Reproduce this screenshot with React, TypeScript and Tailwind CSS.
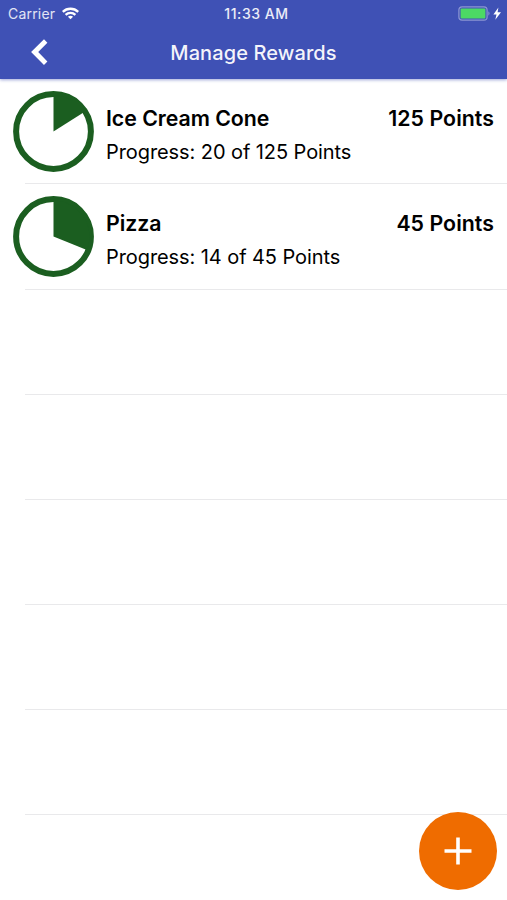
interface Reward {
  name: string
  earned: number
  cost: number
}

const REWARDS: Reward[] = [
  { name: 'Ice Cream Cone', earned: 20, cost: 125 },
  { name: 'Pizza', earned: 14, cost: 45 },
]

// Blank list rows below the rewards
const EMPTY_ROWS = 5

// ─────────────────────────────────────────────
// PROGRESS PIE
// ─────────────────────────────────────────────

function ProgressPie({ fraction }: { fraction: number }) {
  const angle = fraction * Math.PI * 2
  const x = 40.5 + 36 * Math.sin(angle)
  const y = 40.5 - 36 * Math.cos(angle)
  const large = fraction > 0.5 ? 1 : 0

  return (
    <svg className="size-[81px] shrink-0" viewBox="0 0 81 81">
      <circle cx="40.5" cy="40.5" r="37.4" fill="#fff" stroke="#1b5e20" strokeWidth="6" />
      <path d={`M40.5 40.5V4.5A36 36 0 ${large} 1 ${x} ${y}Z`} fill="#1b5e20" />
    </svg>
  )
}

// ─────────────────────────────────────────────
// HEADER
// ─────────────────────────────────────────────

function StatusBar() {
  return (
    <div className="grid h-[27px] grid-cols-3 items-center pr-[5px] pl-2 text-white">
      <div className="flex items-center gap-[7px]">
        <span className="text-[14px] tracking-[0.2px] text-white/85">Carrier</span>
        <svg className="h-[13px] w-[17px]" viewBox="0 0 17 13" fill="none" stroke="#fff" strokeWidth="2.3">
          <path d="M0.8 4.9C5.1 0.7 11.9 0.7 16.2 4.9" />
          <path d="M3.6 7.9C6.3 5.3 10.7 5.3 13.4 7.9" />
          <path d="M8.5 12.3L5.9 9.7C7.3 8.4 9.7 8.4 11.1 9.7Z" fill="#fff" stroke="none" />
        </svg>
      </div>
      <span className="ml-[3px] text-center text-[14px] font-medium tracking-[0.55px] text-white/90">11:33 AM</span>
      <div className="flex items-center justify-end">
        <svg className="h-[15px] w-[44px]" viewBox="0 0 44 15">
          <rect x="0.9" y="0.9" width="28.2" height="13.2" rx="3.2" fill="none" stroke="#fff" strokeOpacity="0.4" strokeWidth="1.2" />
          <rect x="2.6" y="2.6" width="24.8" height="9.8" rx="1" fill="#4cd964" />
          <path d="M30.5 5.3Q32.4 7.5 30.5 9.7Z" fill="#fff" fillOpacity="0.5" />
          <path d="M40.4 1.4L35.4 8.4H38.5L37.3 13.8L43 6.2H39.6Z" fill="#fff" />
        </svg>
      </div>
    </div>
  )
}

function Header() {
  return (
    <header className="relative z-10 h-[79px] bg-[#3f51b5] shadow-[0_1px_3px_rgba(63,81,181,0.5)]">
      <StatusBar />
      <div className="grid h-[50px] grid-cols-[1fr_auto_1fr] items-center text-white">
        <button className="ml-[31px] w-[17px]" aria-label="Back">
          <svg className="h-[27px] w-[17px]" viewBox="0 0 17 27" fill="#fff">
            <path d="M13 0.3L16.4 3.8L7.2 13.1L16.4 22.4L13 25.9L0.1 13.1Z" />
          </svg>
        </button>
        <h1 className="pt-px text-[20px] font-medium tracking-[0.1px] text-white/95">Manage Rewards</h1>
      </div>
    </header>
  )
}

// ─────────────────────────────────────────────
// LIST
// ─────────────────────────────────────────────

function Separator() {
  return <div className="ml-[25px] h-px bg-[#e9e9eb]" />
}

function RewardRow({ reward }: { reward: Reward }) {
  return (
    <li className="group">
      <div className="flex h-[104px] px-[13px] pt-3 group-even:h-[105px]">
        <ProgressPie fraction={reward.earned / reward.cost} />
        <div className="ml-3 flex-1 pt-[11px] text-black">
          <div className="flex justify-between text-[21.3px] leading-8 font-semibold tracking-[-0.03px]">
            <span>{reward.name}</span>
            <span className="tracking-[0.05px]">{reward.cost} Points</span>
          </div>
          <p className="mt-0.5 text-[20px] leading-8 tracking-[-0.08px]">
            Progress: {reward.earned} of {reward.cost} Points
          </p>
        </div>
      </div>
      <Separator />
    </li>
  )
}

export default function App() {
  return (
    <div className="relative h-[900px] w-full overflow-hidden bg-white font-['Inter',sans-serif]">
      <Header />

      <ul>
        {REWARDS.map((reward) => (
          <RewardRow key={reward.name} reward={reward} />
        ))}
        {Array.from({ length: EMPTY_ROWS }, (_, i) => (
          <li key={i} className="pt-[104px]">
            <Separator />
          </li>
        ))}
      </ul>

      {/* Floating add button */}
      <button
        className="absolute right-[10px] bottom-[10px] flex size-[78px] items-center justify-center rounded-full bg-[#ef6c00]"
        aria-label="Add reward"
      >
        <svg className="size-[28px]" viewBox="0 0 28 28" stroke="#fff" strokeWidth="3.6">
          <path d="M14 0.5V27.5M0.5 14H27.5" />
        </svg>
      </button>
    </div>
  )
}
